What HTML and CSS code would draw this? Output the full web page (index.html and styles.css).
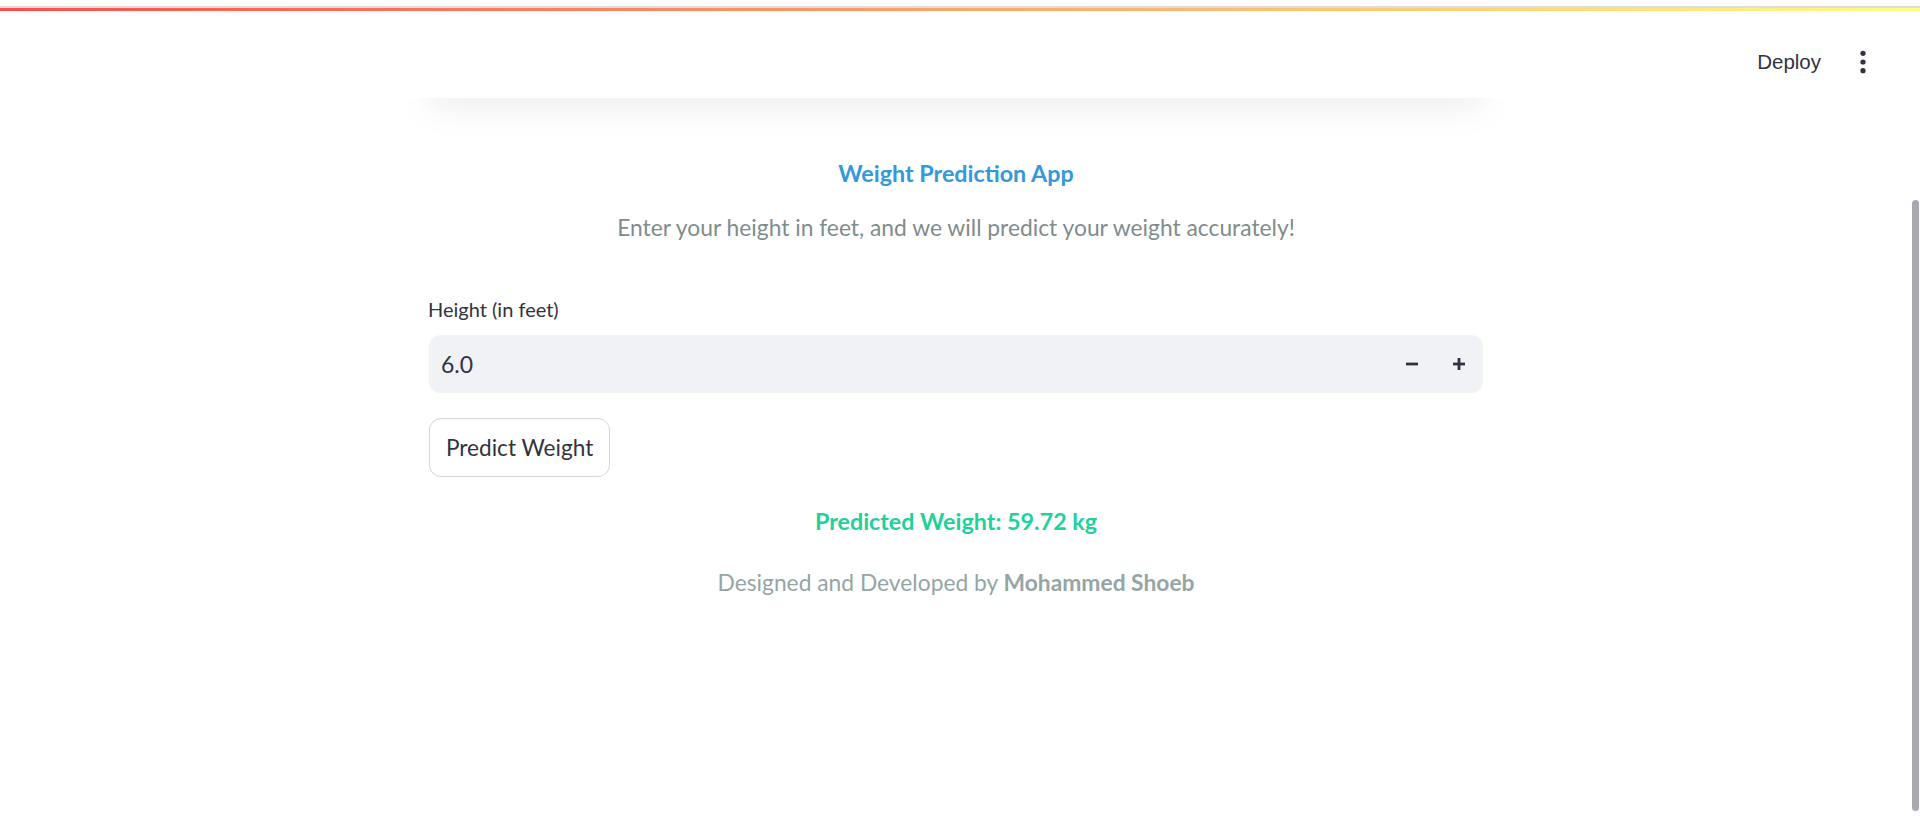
FILE: index.html
```html
<!DOCTYPE html>
<html lang="en">
<head>
<meta charset="utf-8">
<title>Weight Prediction App</title>
<link rel="stylesheet" href="styles.css">
</head>
<body>
  <div class="topline">
    <div class="topline-grey"></div>
    <div class="topline-bar"></div>
  </div>
  <div class="frame">
    <div class="app">
      <div class="shadow-deco"></div>
      <header class="header">
        <button class="deploy">Deploy</button>
        <button class="menu" aria-label="Main menu">
          <svg width="6" height="24" viewBox="0 0 6 24"><circle cx="3" cy="3.3" r="2.6" fill="#31333f"/><circle cx="3" cy="12" r="2.6" fill="#31333f"/><circle cx="3" cy="20.7" r="2.6" fill="#31333f"/></svg>
        </button>
      </header>
      <main class="main">
        <div class="block">
          <p class="title">Weight Prediction App</p>
          <p class="subtitle">Enter your height in feet, and we will predict your weight accurately!</p>
          <label class="label">Height (in feet)</label>
          <div class="number-input">
            <span class="value">6.0</span>
            <div class="steps">
              <button class="step" aria-label="decrement">
                <svg width="12" height="12" viewBox="0 0 12 12"><rect x="0" y="4.6" width="12" height="2.8" fill="#31333f"/></svg>
              </button>
              <button class="step" aria-label="increment">
                <svg width="12" height="12" viewBox="0 0 12 12"><rect x="0" y="4.6" width="12" height="2.8" fill="#31333f"/><rect x="4.6" y="0" width="2.8" height="12" fill="#31333f"/></svg>
              </button>
            </div>
          </div>
          <div class="btn-row"><button class="predict">Predict Weight</button></div>
          <p class="result">Predicted Weight: 59.72 kg</p>
          <p class="footer">Designed and Developed by <strong>Mohammed Shoeb</strong></p>
        </div>
      </main>
    </div>
    <div class="scrollbar"><div class="thumb"></div></div>
  </div>
</body>
</html>
```

FILE: styles.css
```css
* { box-sizing: border-box; }
html, body { margin: 0; padding: 0; height: 100%; }
body {
  background: #ffffff;
  font-family: "Lato", "Noto Sans", sans-serif;
  color: #31333f;
  display: flex;
  flex-direction: column;
  overflow: hidden;
}
.topline { padding-top: 6px; flex: none; }
.topline-grey { height: 2px; background: #dcdcdc; }
.topline-bar { height: 3px; background: linear-gradient(90deg, #ff4b4b, #fffd80); }

.frame { flex: 1; display: flex; min-height: 0; }
.app { flex: 1; position: relative; overflow: hidden; display: flex; flex-direction: column; }

.shadow-deco {
  position: absolute;
  top: 0;
  left: 50%;
  width: 1054px;
  margin-left: -527px;
  height: 87px;
  background: #fff;
  box-shadow: 0 10px 36px rgba(0, 0, 0, 0.07);
  z-index: 1;
}

.header {
  position: relative;
  z-index: 2;
  background: #fff;
  height: 87px;
  padding-top: 15px;
  padding-right: 29px;
  display: flex;
  justify-content: flex-end;
  align-items: center;
  flex: none;
}
.deploy {
  font-family: "Liberation Sans", Arial, sans-serif;
  font-size: 20.5px;
  color: #31333f;
  background: none;
  border: none;
  padding: 0 14px;
  height: 40px;
  margin-right: 8px;
  cursor: pointer;
}
.menu {
  width: 40px;
  height: 40px;
  border: none;
  background: none;
  display: flex;
  align-items: center;
  justify-content: center;
  padding: 0;
}

.main { flex: 1; display: flex; justify-content: center; }
.block { width: 1054px; padding-top: 57px; display: flex; flex-direction: column; }

.title {
  margin: 0;
  text-align: center;
  font-weight: 700;
  font-size: 23.3px;
  line-height: 36px;
  color: #3498db;
}
.subtitle {
  margin: 18px 0 0;
  text-align: center;
  font-size: 22.8px;
  line-height: 36px;
  color: #7f8c8d;
}
.label {
  margin-top: 48px;
  margin-left: -1px;
  font-size: 20px;
  line-height: 32px;
  color: #31333f;
}
.number-input {
  margin-top: 10px;
  height: 58px;
  background: #f0f2f6;
  border-radius: 12px;
  display: flex;
  align-items: center;
  justify-content: space-between;
  padding-left: 12px;
}
.value { font-size: 23px; color: #31333f; }
.steps { display: flex; height: 100%; }
.step {
  width: 45px;
  height: 100%;
  border: none;
  background: none;
  padding: 0;
  display: flex;
  align-items: center;
  justify-content: center;
}
.steps .step:first-child { width: 47px; }
.steps .step:last-child { width: 48px; }

.btn-row { margin-top: 25px; display: flex; }
.predict {
  height: 59px;
  padding: 0 16px;
  font-family: "Lato", "Noto Sans", sans-serif;
  font-size: 22.6px;
  color: #31333f;
  background: #fff;
  border: 1px solid #d6d6d9;
  border-radius: 12px;
}
.result {
  margin: 26px 0 0;
  text-align: center;
  font-weight: 700;
  font-size: 23.3px;
  line-height: 36px;
  color: #1fd19b;
}
.footer {
  margin: 25px 0 0;
  text-align: center;
  font-size: 22.8px;
  line-height: 36px;
  color: #95a5a6;
}
.footer strong { font-weight: 700; }

.scrollbar { width: 8px; flex: none; }
.thumb {
  margin-top: 189px;
  width: 7px;
  height: 611px;
  border-radius: 4px;
  background: #a9a9af;
}
```
